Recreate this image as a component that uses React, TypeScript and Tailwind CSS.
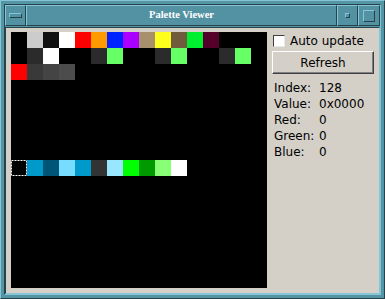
import React from "react";

const LIGHT = "#86c5d5";
const DARK = "#27424a";

// palette entries that are not black, keyed by index
const colors: Record<number, string> = {
  1: "#cccccc", 2: "#111111", 3: "#ffffff", 4: "#ff0000", 5: "#ff9a00", 6: "#0022ff",
  7: "#aa00ff", 8: "#a8906c", 9: "#ffff1e", 10: "#705c3c", 11: "#00ee30", 12: "#550028",
  17: "#2b2b2b", 18: "#ffffff", 21: "#2b2b2b", 22: "#66ff66", 25: "#2b2b2b", 26: "#66ff66",
  29: "#2b2b2b", 30: "#66ff66",
  32: "#ff0000", 33: "#393939", 34: "#444444", 35: "#4c4c4c",
  129: "#0099cc", 130: "#005577", 131: "#77ddff", 132: "#0099cc", 133: "#333333",
  134: "#99e6ff", 135: "#00ff00", 136: "#009900", 137: "#88ff77", 138: "#ffffff",
};

const selected = 128;

const Raised: React.FC<{ className?: string; children?: React.ReactNode }> = ({ className = "", children }) => (
  <div
    className={`border border-t-[#86c5d5] border-l-[#86c5d5] border-b-[#27424a] border-r-[#27424a] bg-[#5392a2] ${className}`}
  >
    {children}
  </div>
);

const App: React.FC = () => {
  const rows = [
    ["Index:", "128"],
    ["Value:", "0x0000"],
    ["Red:", "0"],
    ["Green:", "0"],
    ["Blue:", "0"],
  ];

  return (
    <div
      className="w-[385px] h-[299px] bg-[#5596a6] border border-t-[#86c5d5] border-l-[#86c5d5] border-b-[#27424a] border-r-[#27424a] p-[3px] flex"
      style={{ fontFamily: '"DejaVu Sans", sans-serif' }}
    >
      <div className="flex-1 flex flex-col border border-t-[#27424a] border-l-[#27424a] border-b-[#86c5d5] border-r-[#86c5d5]">
        {/* Title bar */}
        <div className="h-[21px] flex">
          <Raised className="w-[21px] flex items-center justify-center">
            <Raised className="w-[13px] h-[5px]" />
          </Raised>
          <Raised className="flex-1 flex items-center justify-center">
            <span
              className="text-white font-bold text-[10.5px] leading-none"
              style={{ fontFamily: '"Liberation Serif", serif' }}
            >
              Palette Viewer
            </span>
          </Raised>
          <Raised className="w-[21px] flex items-center justify-center">
            <Raised className="w-[5px] h-[5px]" />
          </Raised>
          <Raised className="w-[22px] flex items-center justify-center">
            <Raised className="w-[12px] h-[12px]" />
          </Raised>
        </div>

        {/* Client area */}
        <div className="mt-[1px] flex-1 border border-t-[#27424a] border-l-[#27424a] border-b-[#86c5d5] border-r-[#86c5d5] bg-[#d4d0c8] flex pl-[5px] pt-[4px]">
          <div className="w-[256px] h-[256px] bg-black grid grid-cols-16">
            {Array.from({ length: 256 }, (_, i) => (
              <div key={i} className="w-[16px] h-[16px]" style={{ background: colors[i] ?? "#000000" }}>
                {i === selected && (
                  <svg width="16" height="16" className="block">
                    <rect x="0.5" y="0.5" width="15" height="15" fill="none" stroke="#ffffff" strokeDasharray="2 1" />
                  </svg>
                )}
              </div>
            ))}
          </div>

          <div className="ml-[5px] w-[102px] flex flex-col text-[12px] text-black">
            <label className="h-[18px] flex items-center pl-[1px]">
              <span className="w-[12px] h-[12px] bg-white border border-t-[#404040] border-l-[#404040] border-b-[#e8e8e8] border-r-[#e8e8e8]" />
              <span className="ml-[5px]">Auto update</span>
            </label>
            <button className="mt-[1px] h-[23px] bg-[#d4d0c8] border border-t-white border-l-white border-b-[#404040] border-r-[#404040] shadow-[inset_-1px_-1px_0_#808080] text-[12px] leading-none">
              Refresh
            </button>
            <div className="mt-[6px] pl-[2px] flex flex-col">
              {rows.map(([k, v]) => (
                <div key={k} className="h-[16px] flex items-center">
                  <span className="w-[45px]">{k}</span>
                  <span>{v}</span>
                </div>
              ))}
            </div>
          </div>
        </div>
      </div>
    </div>
  );
};

export default App;
